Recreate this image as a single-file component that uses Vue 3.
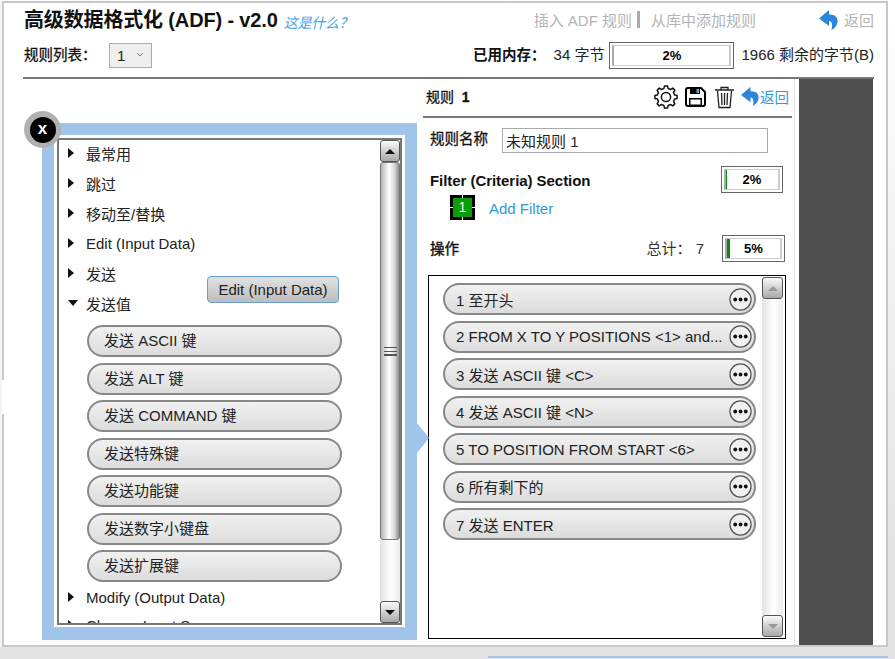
<script setup>
const categoriesTop = ['最常用', '跳过', '移动至/替换', 'Edit (Input Data)', '发送']
const sendKeys = ['发送 ASCII 键', '发送 ALT 键', '发送 COMMAND 键', '发送特殊键', '发送功能键', '发送数字小键盘', '发送扩展键']
const actions = [
  '1 至开头',
  '2 FROM X TO Y POSITIONS <1> and...',
  '3 发送 ASCII 键 <C>',
  '4 发送 ASCII 键 <N>',
  '5 TO POSITION FROM START <6>',
  '6 所有剩下的',
  '7 发送 ENTER'
]
function gearPath() {
  const teeth = 8
  const pts = []
  for (let i = 0; i < teeth; i++) {
    const a = (i / teeth) * Math.PI * 2
    const step = (Math.PI * 2) / teeth
    const p = [
      [8.6, a - step * 0.5],
      [8.9, a - step * 0.3],
      [11.2, a - step * 0.17],
      [11.2, a + step * 0.17],
      [8.9, a + step * 0.3]
    ]
    p.forEach(([r, t]) => pts.push((12 + r * Math.cos(t)).toFixed(2) + ' ' + (12 + r * Math.sin(t)).toFixed(2)))
  }
  return 'M' + pts.join('L') + 'Z'
}
const gear = gearPath()
const backArrow = 'M10 0 L0 8.500 L10 16 V11 C12.500 11 14 13.500 12.500 20 C20 16.500 22 4 10 4.500Z'
</script>

<template>
  <div class="page">
    <div class="win">
      <div class="notch"></div>
      <header class="head">
        <div class="row-one">
          <h1 class="title">高级数据格式化 (ADF) - v2.0</h1>
          <a class="what">这是什么？</a>
          <div class="top-links">
            <span>插入 ADF 规则</span>
            <span class="sep"></span>
            <span>从库中添加规则</span>
            <svg class="back-big" viewBox="0 0 20 20"><path :d="backArrow" fill="#2b86d9" /></svg>
            <span>返回</span>
          </div>
        </div>
        <div class="row-two">
          <span class="list-label">规则列表：</span>
          <div class="select">
            <span>1</span>
            <svg width="8" height="5" viewBox="0 0 8 5"><path d="M1 1l3 3 3-3" fill="none" stroke="#777" stroke-width="1" /></svg>
          </div>
          <div class="memory">
            <strong class="mem-label">已用内存：</strong>
            <span>34 字节</span>
            <div class="progress wide"><div class="progress-in"><b>2%</b></div></div>
            <span>1966 剩余的字节(B)</span>
          </div>
        </div>
      </header>

      <main class="body">
        <div class="left">
          <div class="close"><span>x</span></div>
          <div class="blue">
            <div class="white">
              <div class="tree-frame">
                <div class="tree">
                  <div v-for="c in categoriesTop" :key="c" class="tree-row lifted"><i class="tri"></i>{{ c }}</div>
                  <div class="tree-row lifted"><i class="tri down"></i>发送值</div>
                  <div class="keys">
                    <div v-for="k in sendKeys" :key="k" class="key">{{ k }}</div>
                  </div>
                  <div class="tree-row"><i class="tri"></i>Modify (Output Data)</div>
                  <div class="tree-row last"><i class="tri"></i>Change Input Source</div>
                </div>
                <div class="scroll">
                  <div class="sbtn"><i class="up"></i></div>
                  <div class="thumb"><i class="grip"></i></div>
                  <div class="track"></div>
                  <div class="sbtn"><i class="dn"></i></div>
                </div>
                <div class="ghost">Edit (Input Data)</div>
              </div>
            </div>
          </div>
        </div>

        <section class="panel">
          <div class="panel-head">
            <span class="rule-no">规则 <b>&nbsp;1</b></span>
            <div class="tools">
              <svg width="24" height="24" viewBox="0 0 24 24"><path :d="gear" fill="none" stroke="#111" stroke-width="1.500" stroke-linejoin="round" /><circle cx="12" cy="12" r="4.600" fill="none" stroke="#111" stroke-width="1.500" /></svg>
              <svg class="save" width="21" height="20" viewBox="0 0 21 20"><path d="M1 3a2 2 0 0 1 2-2h13l4 4v12a2 2 0 0 1-2 2H3a2 2 0 0 1-2-2z" fill="none" stroke="#000" stroke-width="2" /><rect x="5" y="1" width="10" height="6" fill="#000" /><rect x="11.500" y="2" width="2.500" height="4" fill="#6aa6e0" /><rect x="4" y="11" width="13" height="7" fill="#000" /><rect x="5.500" y="12.500" width="10" height="5" fill="#fff" /></svg>
              <svg class="trash" width="21" height="24" viewBox="0 0 21 24"><path d="M1 5h19M7 4.500V2.500h7v2M3.500 6l1.500 16.500h11L17.500 6M7.500 8l.5 12M10.500 8v12M13.500 8l-.5 12" fill="none" stroke="#222" stroke-width="1.300" /></svg>
              <svg class="back-small" width="19" height="19" viewBox="0 0 20 20"><path :d="backArrow" fill="#2b86d9" /></svg>
              <span class="back-text">返回</span>
            </div>
          </div>

          <div class="name-row">
            <span class="name-label">规则名称</span>
            <input class="name-input" value="未知规则 1" readonly />
          </div>

          <div class="filter-row">
            <strong class="filter-label">Filter (Criteria) Section</strong>
            <div class="progress small"><div class="progress-in"><i class="fill thin"></i><b>2%</b></div></div>
          </div>
          <div class="add-row">
            <div class="filter-chip">1</div>
            <a class="add">Add Filter</a>
          </div>

          <div class="ops-row">
            <span class="ops-label">操作</span>
            <span class="total">总计： 7</span>
            <div class="progress small"><div class="progress-in"><i class="fill"></i><b>5%</b></div></div>
          </div>

          <div class="actions">
            <div class="action-list">
              <div v-for="a in actions" :key="a" class="pill">
                <span class="pill-text">{{ a }}</span>
                <svg class="more" width="23" height="23" viewBox="0 0 24 24"><circle cx="12" cy="12" r="11" fill="#f1f1f1" stroke="#555" stroke-width="1.300" /><circle cx="6.500" cy="12" r="2" fill="#111" /><circle cx="12" cy="12" r="2" fill="#111" /><circle cx="17.500" cy="12" r="2" fill="#111" /></svg>
              </div>
            </div>
            <div class="scroll off">
              <div class="sbtn"><i class="up"></i></div>
              <div class="track"></div>
              <div class="sbtn"><i class="dn"></i></div>
            </div>
          </div>
        </section>

        <div class="rail"></div>
      </main>
    </div>
    <div class="strip"></div>
  </div>
</template>

<style>
html, body { margin: 0; background: #e2e2e2; }
</style>

<style scoped>
* { box-sizing: border-box; }
.page {
  width: 895px;
  height: 659px;
  overflow: hidden;
  padding: 1px 0 0 2px;
  background: linear-gradient(#fff, #e4e4e4 85%);
  font: 15px "Liberation Sans", "Noto Sans CJK SC", sans-serif;
  color: #222;
}
.win {
  position: relative;
  width: 886px;
  height: 646px;
  border: 2px solid #c8c8c8;
  background: #fff;
  box-shadow: -2px 0 0 #f4f4f4;
}
.notch {
  position: absolute;
  left: -2px;
  top: 377px;
  width: 4px;
  height: 34px;
  background: #fff;
}
.head { padding: 0 12px 0 19px; }
.row-one { display: flex; align-items: center; height: 36px; padding-left: 1px; }
.title { margin: -6px 0 0; font-size: 20px; font-weight: 700; color: #111; white-space: nowrap; letter-spacing: -0.150px; }
.what { margin-left: 6px; margin-top: 2px; font-size: 14px; font-style: italic; color: #41a4e6; letter-spacing: -0.200px; }
.top-links { margin-left: auto; display: flex; align-items: center; color: #b4b4b4; margin-top: -3px; }
.sep { width: 3px; height: 17px; background: #aaa; margin: 0 11px 0 5px; }
.back-big { width: 20px; height: 20px; margin: 0 5px 0 63px; }
.row-two { display: flex; align-items: center; height: 27px; margin-top: 3px; padding-left: 1px; }
.list-label { color: #111; width: 85px; -webkit-text-stroke: 0.300px #111; margin-top: -4px; font-size: 14.500px; }
.select {
  width: 43px; height: 25px; border: 1px solid #aaa; background: #efefef;
  display: flex; align-items: center; gap: 11px; padding-left: 7px;
}
.select svg { margin-bottom: 3px; }
.memory { margin-left: auto; display: flex; align-items: center; color: #222; }
.memory > span, .mem-label { margin-top: -4px; }
.mem-label { color: #111; margin-right: 8px; font-size: 14.500px; }
.progress { border: 1px solid #666; padding: 2px; background: #fff; flex: none; }
.progress-in {
  position: relative; height: 100%; display: flex; align-items: center; justify-content: center;
  border: 1px solid #ccc; border-left: 2px solid #aaa; border-right: 2px solid #ccc;
  font-size: 13px; color: #000;
}
.wide { width: 125px; height: 27px; margin: 0 7px 0 5px; }
.small { width: 62px; height: 27px; }
.fill { position: absolute; left: 0; top: 0; bottom: 0; width: 3px; background: #0a8a0a; }
.fill.thin { width: 1px; }

.body {
  display: flex;
  margin: 8px 12px 0 19px;
  height: 568px;
  border-top: 2px solid #777;
}
.left { position: relative; width: 394px; padding: 44px 0 0 19px; flex: none; }
.close {
  position: absolute; left: 1px; top: 32px; width: 37px; height: 37px; border-radius: 50%;
  background: #b0b0b0; display: flex; align-items: center; justify-content: center; z-index: 2;
}
.close span {
  width: 26px; height: 26px; border-radius: 50%; background: #000; color: #fff;
  font-weight: 700; font-size: 17px; line-height: 23px; text-align: center;
}
.blue { position: relative; width: 375px; height: 517px; background: #a0c4ea; padding: 12px; }
.blue::after {
  content: ""; position: absolute; left: 375px; top: 300px;
  border-style: solid; border-width: 15px 0 15px 12px;
  border-color: transparent transparent transparent #a0c4ea;
}
.white { width: 351px; height: 492px; background: #fff; padding: 3px 3px 2px; }
.tree-frame { position: relative; display: flex; height: 100%; border: 2px solid #777; }
.tree { width: 321px; overflow: hidden; height: 100%; flex: none; }
.tree-row { display: flex; align-items: center; height: 30px; padding-left: 9px; white-space: nowrap; color: #222; }
.tree-row.lifted { padding-bottom: 4px; }
.tree-row.last { margin-top: -2px; }
.tri {
  width: 0; height: 0; margin-right: 12px;
  border-style: solid; border-width: 5px 0 5px 6px; border-color: transparent transparent transparent #111;
}
.tri.down { border-width: 6px 5px 0; border-color: #111 transparent transparent; margin-right: 8px; }
.keys { padding: 5px 0 0 28px; display: flex; flex-direction: column; gap: 5.500px; }
.key {
  width: 255px; height: 32px; border: 2px solid #888; border-radius: 16px;
  background: linear-gradient(#f1f1f1, #dcdcdc);
  padding-left: 15px; line-height: 27px; color: #222;
}
.ghost {
  position: absolute; left: 148px; top: 136px; width: 132px; height: 27px;
  border: 1px solid #6a9fd4; border-radius: 4px;
  background: linear-gradient(#e2e2e2, #bdbdbd);
  text-align: center; line-height: 25px; color: #222; white-space: nowrap;
}
.scroll { width: 20px; display: flex; flex-direction: column; height: 100%; flex: none; }
.sbtn {
  height: 22px; border: 1px solid #555; border-radius: 3px; flex: none;
  background: linear-gradient(#fafafa, #a8a8a8);
  display: flex; align-items: center; justify-content: center;
}
.up { border-style: solid; border-width: 0 5px 5px; border-color: transparent transparent #111; }
.dn { border-style: solid; border-width: 5px 5px 0; border-color: #111 transparent transparent; }
.thumb {
  height: 378px; border: 1px solid #777; border-radius: 3px; flex: none;
  background: linear-gradient(90deg, #b4b4b4, #fff 45%, #d8d8d8 75%, #8e8e8e);
  display: flex; align-items: center; justify-content: center;
}
.grip { width: 13px; height: 9px; border-top: 1px solid #555; border-bottom: 2px solid #555; position: relative; }
.grip::after { content: ""; position: absolute; left: 0; right: 0; top: 3px; height: 1px; background: #555; }
.track { flex: 1; background: linear-gradient(90deg, #e2e2e2, #fff 55%, #ececec); }
.off .up { border-bottom-color: #999; }
.off .dn { border-top-color: #999; }

.panel { width: 369px; margin-left: 6px; flex: none; }
.panel-head {
  display: flex; align-items: center; height: 39px; padding-left: 3px;
  border-bottom: 2px solid #777; padding-bottom: 2px; color: #111;
}
.rule-no { -webkit-text-stroke: 0.300px #111; font-size: 14px; margin-top: -2px; }
.tools { margin-left: auto; display: flex; align-items: center; padding-right: 3px; }
.save { margin-left: 7px; }
.trash { margin-left: 8px; }
.back-small { margin-left: 6px; }
.back-text { color: #2e9ae0; font-size: 14.500px; }
.name-row { display: flex; align-items: flex-start; margin-top: 10px; padding-left: 7px; height: 25px; }
.name-label { width: 72px; color: #111; -webkit-text-stroke: 0.300px #111; margin-top: -1px; font-size: 14.500px; }
.name-input {
  width: 266px; height: 25px; border: 1px solid #aaa; padding: 0 3px; outline: none;
  font: 15px "Liberation Sans", "Noto Sans CJK SC", sans-serif; color: #222;
}
.filter-row { display: flex; align-items: center; justify-content: space-between; margin-top: 13px; padding: 0 9px 0 7px; height: 27px; color: #111; }
.filter-label { margin-top: 2px; letter-spacing: -0.050px; }
.add-row { display: flex; align-items: center; margin-top: 2px; padding-left: 27px; height: 25px; }
.filter-chip {
  position: relative; width: 25px; height: 25px; border: 3px solid #000; background: #0a9c0a;
  color: #e8ffe8; text-align: center; line-height: 19px; font-size: 14px; flex: none;
}
.filter-chip::before {
  content: ""; position: absolute; left: 9px; top: -3px; bottom: -3px; width: 1px;
  background: linear-gradient(#fff 3px, transparent 3px, transparent 22px, #fff 22px);
}
.filter-chip::after {
  content: ""; position: absolute; top: 9px; left: -3px; right: -3px; height: 1px;
  background: linear-gradient(90deg, #fff 3px, transparent 3px, transparent 22px, #fff 22px);
}
.add { margin-left: 14px; margin-top: 2px; color: #2e9ae0; }
.ops-row { display: flex; align-items: center; margin-top: 15px; padding: 0 7px 0 7px; height: 27px; color: #111; }
.ops-label { -webkit-text-stroke: 0.400px #111; font-size: 14.500px; margin-top: -3px; }
.total { margin-left: auto; margin-right: 18px; margin-top: -3px; color: #333; }
.ops-row .small { width: 63px; }
.actions {
  display: flex; width: 358px; height: 364px; margin: 13px 0 0 5px; border: 1px solid #000;
}
.action-list { width: 333px; flex: none; padding: 7px 0 0 14px; display: flex; flex-direction: column; gap: 5.500px; }
.pill {
  position: relative; width: 313px; height: 32px; flex: none; border: 2px solid #888; border-radius: 16px;
  background: linear-gradient(#f1f1f1, #dcdcdc);
  display: flex; align-items: center; padding: 0 26px 0 11px;
}
.pill-text { white-space: nowrap; color: #222; }
.more { position: absolute; right: 2px; top: 2.500px; }
.actions .scroll { width: 21px; height: 360px; margin: 1px 0 0 0; }
.rail { position: relative; width: 74px; margin-left: 7px; background: #4f4f4f; flex: none; }
.rail::before { content: ""; position: absolute; left: -5px; top: 0; bottom: 0; border-left: 1px dotted #ccc; }
.strip { width: 400px; height: 2px; margin: 9px 0 0 486px; background: #a0c4ee; }
</style>
